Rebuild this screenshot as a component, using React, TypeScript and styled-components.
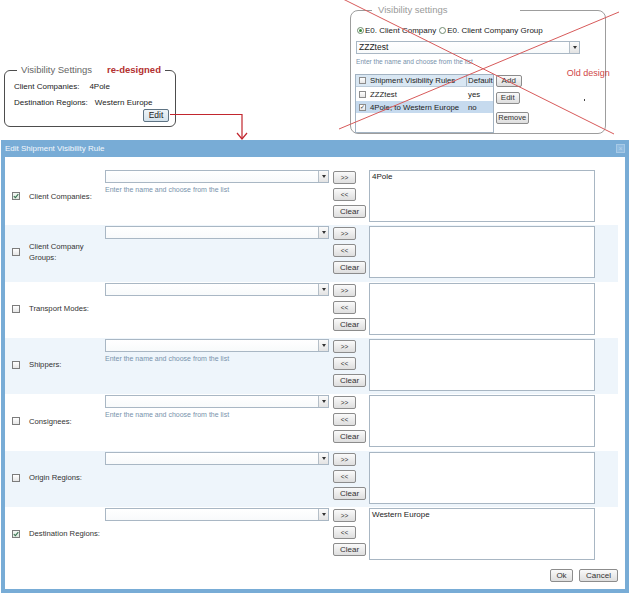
import React from "react";
import styled, { createGlobalStyle } from "styled-components";

const GlobalStyle = createGlobalStyle`
  html, body { margin: 0; padding: 0; background: #fff; }
  body {
    font-family: "Liberation Sans", Arial, sans-serif;
    color: #222;
    width: 636px;
    height: 596px;
    overflow: hidden;
  }
  * { box-sizing: border-box; }
`;

const Page = styled.div`
  width: 636px;
  height: 596px;
`;

/* ---------- top area ---------- */

const TopArea = styled.div`
  position: relative;
  height: 140px;
  display: flex;
  align-items: flex-start;
`;

const Overlay = styled.svg`
  position: absolute;
  left: 0;
  top: 0;
  width: 636px;
  height: 140px;
  pointer-events: none;
  overflow: visible;
`;

const NewPanel = styled.fieldset`
  margin: 64px 0 0 4px;
  width: 172px;
  height: 63px;
  padding: 0 6px 0 9px;
  border: 1px solid #4d4d4d;
  border-radius: 6px;
  min-width: 0;
`;

const NewLegend = styled.legend`
  margin-left: 3px;
  padding: 0 4px;
  font-size: 9.5px;
  line-height: 12px;
  color: #666;
`;

const RedTag = styled.span`
  margin-left: 15px;
  font-weight: bold;
  color: #b3302f;
`;

const InfoList = styled.div`
  padding-top: 2px;
`;

const InfoRow = styled.div<{ $gap: number }>`
  display: flex;
  gap: ${(p) => p.$gap}px;
  height: 16px;
  align-items: center;
  font-size: 8px;
  color: #222;
`;

const ButtonRow = styled.div`
  display: flex;
  justify-content: flex-end;
  margin-top: -1px;
`;

const BlueButton = styled.button`
  width: 26px;
  height: 13px;
  padding: 0;
  border: 1px solid #5e7383;
  border-radius: 2px;
  background: linear-gradient(#eef4f8, #d3e2ec);
  font-family: inherit;
  font-size: 8.5px;
  line-height: 11px;
  color: #222;
`;

const OldPanel = styled.fieldset`
  margin: 4px 0 0 174px;
  width: 256px;
  height: 130px;
  padding: 0 5px;
  border: 1px solid #9d9d9d;
  border-radius: 8px;
  min-width: 0;
`;

const OldLegend = styled.legend`
  margin-left: 16px;
  padding: 0 6px;
  width: 148px;
  font-size: 9.5px;
  line-height: 12px;
  color: #9a9a9a;
`;

const RadioRow = styled.div`
  margin-top: 7px;
  height: 14px;
  display: flex;
  align-items: center;
  font-size: 8px;
  color: #222;
`;

const Radio = styled.span<{ $on: boolean }>`
  width: 7px;
  height: 7px;
  margin: 0 1px 0 ${(p) => (p.$on ? 1 : 3)}px;
  border-radius: 50%;
  border: 1px solid #6f8a6f;
  background: #fff;
  display: inline-flex;
  align-items: center;
  justify-content: center;
  &::after {
    content: "";
    width: 3px;
    height: 3px;
    border-radius: 50%;
    background: ${(p) => (p.$on ? "#3a8a3a" : "transparent")};
  }
`;

const SelectBox = styled.div<{ $w: number; $mt: number }>`
  width: ${(p) => p.$w}px;
  height: 13px;
  margin-top: ${(p) => p.$mt}px;
  border: 1px solid #a9b7c4;
  background: linear-gradient(#fff, #f8fafb);
  display: flex;
  align-items: stretch;
  font-size: 8.5px;
  color: #222;
`;

const SelectText = styled.span`
  flex: 1;
  padding-left: 2px;
  line-height: 11px;
`;

const SelectArrow = styled.span`
  width: 10px;
  border-left: 1px solid #b5bfc8;
  background: linear-gradient(#fbfbfb, #e3e3e3);
  display: flex;
  align-items: center;
  justify-content: center;
  &::after {
    content: "";
    border-left: 2px solid transparent;
    border-right: 2px solid transparent;
    border-top: 3px solid #333;
  }
`;

const Hint = styled.div<{ $size: number; $mt: number }>`
  margin-top: ${(p) => p.$mt}px;
  font-size: ${(p) => p.$size}px;
  line-height: 8px;
  color: #7892ab;
  white-space: nowrap;
`;

const OldBottom = styled.div`
  display: flex;
  align-items: flex-start;
  margin-top: 8px;
`;

const RuleTable = styled.div`
  width: 144px;
  height: 59px;
  margin-left: -1px;
  border: 1px solid #a3b3c2;
  background: #fff;
  font-size: 7.8px;
  color: #222;
`;

const TableLine = styled.div<{ $kind: "head" | "row" | "sel" }>`
  height: 12px;
  display: flex;
  align-items: center;
  margin-top: ${(p) => (p.$kind === "head" ? 0 : 1)}px;
  background: ${(p) =>
    p.$kind === "head" ? "#d9e7f3" : p.$kind === "sel" ? "#c6daee" : "transparent"};
  border-bottom: ${(p) => (p.$kind === "head" ? "1px solid #bccbd9" : "none")};
`;

const FirstCell = styled.div`
  width: 110px;
  display: flex;
  align-items: center;
  gap: 4px;
  padding-left: 3px;
  white-space: nowrap;
  overflow: hidden;
`;

const SecondCell = styled.div<{ $divider: boolean }>`
  flex: 1;
  height: 100%;
  display: flex;
  align-items: center;
  padding-left: 1px;
  border-left: 1px solid ${(p) => (p.$divider ? "#a3b3c2" : "transparent")};
`;

const TinyCheck = styled.span<{ $on: boolean }>`
  width: 7px;
  height: 7px;
  flex: none;
  border: 1px solid #8c8c8c;
  background: linear-gradient(#fff, #e6e6e6);
  display: inline-flex;
  align-items: center;
  justify-content: center;
  font-size: 6px;
  line-height: 6px;
  color: #333;
`;

const SideButtons = styled.div`
  margin-left: 2px;
  display: flex;
  flex-direction: column;
  align-items: flex-start;
`;

const GreyButton = styled.button<{ $w: number; $h: number; $mt: number; $size: number }>`
  width: ${(p) => p.$w}px;
  height: ${(p) => p.$h}px;
  margin-top: ${(p) => p.$mt}px;
  padding: 0;
  border: 1px solid #8c8c8c;
  border-radius: 2px;
  background: linear-gradient(#fafafa, #dedede);
  font-family: inherit;
  font-size: ${(p) => p.$size}px;
  line-height: ${(p) => p.$h - 2}px;
  color: #333;
  white-space: nowrap;
`;

const Annotation = styled.div`
  margin: -7px 0 0 38px;
  display: flex;
  flex-direction: column;
  flex: none;
`;

const OldNote = styled.span`
  font-size: 9px;
  line-height: 12px;
  color: #d04747;
  white-space: nowrap;
`;

const Dot = styled.span`
  width: 1.5px;
  height: 1.5px;
  margin: 20px 0 0 17px;
  background: #444;
`;

/* ---------- dialog ---------- */

const Dialog = styled.section`
  margin-left: 1px;
  width: 628px;
  padding: 0 4px 4px;
  background: #78acd6;
`;

const TitleBar = styled.header`
  height: 17px;
  display: flex;
  align-items: center;
  justify-content: space-between;
  font-size: 8px;
  color: #f4f8fc;
`;

const CloseBox = styled.span`
  width: 9px;
  height: 9px;
  border: 1px solid #a8cae6;
  background: #8fbbe0;
  color: #b9d5ec;
  font-size: 7px;
  line-height: 7px;
  text-align: center;
`;

const Body = styled.div`
  background: #fff;
  padding: 12px 7px 0 0;
`;

const RuleRow = styled.div<{ $alt: boolean }>`
  display: flex;
  align-items: flex-start;
  height: 56.33px;
  padding-top: 1px;
  background: ${(p) => (p.$alt ? "#eef5fb" : "transparent")};
`;

const LeftCell = styled.div`
  width: 100px;
  height: 52px;
  padding-left: 7px;
  display: flex;
  align-items: center;
`;

const Check = styled.span<{ $on: boolean }>`
  width: 8px;
  height: 8px;
  flex: none;
  margin-right: 9px;
  border: 1px solid #7c7c7c;
  background: ${(p) => (p.$on ? "linear-gradient(#f4f8f4, #dfe9df)" : "linear-gradient(#fff, #e6e6e6)")};
  display: flex;
  align-items: center;
  justify-content: center;
`;

const RuleLabel = styled.span`
  width: 76px;
  font-size: 7.7px;
  line-height: 11px;
  color: #333;
`;

const SelectCol = styled.div`
  width: 224px;
  margin-right: 4px;
`;

const BtnCol = styled.div`
  width: 33px;
  margin-right: 3px;
  display: flex;
  flex-direction: column;
  align-items: flex-start;
`;

const ListBox = styled.div`
  width: 226px;
  height: 52px;
  padding: 0 2px;
  border: 1px solid #a8b6c3;
  background: #fff;
  font-size: 8px;
  line-height: 11px;
  color: #222;
`;

const Footer = styled.div`
  display: flex;
  justify-content: flex-end;
  gap: 6px;
  padding: 6px 0 7px;
`;

type Rule = { label: string; checked: boolean; hint: boolean; value?: string };

const rules: Rule[] = [
  { label: "Client Companies:", checked: true, hint: true, value: "4Pole" },
  { label: "Client Company Groups:", checked: false, hint: false },
  { label: "Transport Modes:", checked: false, hint: false },
  { label: "Shippers:", checked: false, hint: true },
  { label: "Consignees:", checked: false, hint: true },
  { label: "Origin Regions:", checked: false, hint: false },
  { label: "Destination Regions:", checked: true, hint: false, value: "Western Europe" },
];

const HINT = "Enter the name and choose from the list";

const CheckMark = () => (
  <svg width="6" height="6" viewBox="0 0 6 6">
    <path d="M0.8 3.1 L2.4 4.7 L5.3 1.1" fill="none" stroke="#3b7454" strokeWidth="1.1" />
  </svg>
);

export default function App() {
  return (
    <Page>
      <GlobalStyle />
      <TopArea>
        <NewPanel>
          <NewLegend>
            Visibility Settings<RedTag>re-designed</RedTag>
          </NewLegend>
          <InfoList>
            <InfoRow $gap={10}>
              <span>Client Companies:</span>
              <span>4Pole</span>
            </InfoRow>
            <InfoRow $gap={7}>
              <span>Destination Regions:</span>
              <span>Western Europe</span>
            </InfoRow>
          </InfoList>
          <ButtonRow>
            <BlueButton>Edit</BlueButton>
          </ButtonRow>
        </NewPanel>

        <OldPanel>
          <OldLegend>Visibility settings</OldLegend>
          <RadioRow>
            <Radio $on={true} />
            <span>E0. Client Company</span>
            <Radio $on={false} />
            <span>E0. Client Company Group</span>
          </RadioRow>
          <SelectBox $w={224} $mt={4}>
            <SelectText>ZZZtest</SelectText>
            <SelectArrow />
          </SelectBox>
          <Hint $size={6.6} $mt={4}>{HINT}</Hint>
          <OldBottom>
            <RuleTable>
              <TableLine $kind="head">
                <FirstCell>
                  <TinyCheck $on={false} />
                  Shipment Visibility Rules
                </FirstCell>
                <SecondCell $divider={true}>Default</SecondCell>
              </TableLine>
              <TableLine $kind="row">
                <FirstCell>
                  <TinyCheck $on={false} />
                  ZZZtest
                </FirstCell>
                <SecondCell $divider={false}>yes</SecondCell>
              </TableLine>
              <TableLine $kind="sel">
                <FirstCell>
                  <TinyCheck $on={true}>✓</TinyCheck>
                  4Pole; to Western Europe
                </FirstCell>
                <SecondCell $divider={false}>no</SecondCell>
              </TableLine>
            </RuleTable>
            <SideButtons>
              <GreyButton $w={26} $h={12} $mt={1} $size={8}>Add</GreyButton>
              <GreyButton $w={24} $h={12} $mt={5} $size={8}>Edit</GreyButton>
              <GreyButton $w={33} $h={12} $mt={8} $size={7.5}>Remove</GreyButton>
            </SideButtons>
            <Annotation>
              <OldNote>Old design</OldNote>
              <Dot />
            </Annotation>
          </OldBottom>
        </OldPanel>

        <Overlay viewBox="0 0 636 140">
          <line x1="343" y1="-1" x2="614" y2="134" stroke="#d75a5a" strokeWidth="1" />
          <line x1="619" y1="12" x2="339" y2="129" stroke="#d75a5a" strokeWidth="1" />
          <polyline
            points="170,114.5 242,114.5 242,139"
            fill="none"
            stroke="#c2262e"
            strokeWidth="1.2"
          />
          <polyline
            points="237,133 242,139 247,133"
            fill="none"
            stroke="#c2262e"
            strokeWidth="1.2"
          />
        </Overlay>
      </TopArea>

      <Dialog>
        <TitleBar>
          <span>Edit Shipment Visibility Rule</span>
          <CloseBox>×</CloseBox>
        </TitleBar>
        <Body>
          {rules.map((r, i) => (
            <RuleRow key={r.label} $alt={i % 2 === 1}>
              <LeftCell>
                <Check $on={r.checked}>{r.checked && <CheckMark />}</Check>
                <RuleLabel>{r.label}</RuleLabel>
              </LeftCell>
              <SelectCol>
                <SelectBox $w={224} $mt={0}>
                  <SelectText />
                  <SelectArrow />
                </SelectBox>
                {r.hint && <Hint $size={7} $mt={3}>{HINT}</Hint>}
              </SelectCol>
              <BtnCol>
                <GreyButton $w={23} $h={13} $mt={1} $size={6.5}>&gt;&gt;</GreyButton>
                <GreyButton $w={23} $h={13} $mt={4} $size={6.5}>&lt;&lt;</GreyButton>
                <GreyButton $w={33} $h={13} $mt={4} $size={8}>Clear</GreyButton>
              </BtnCol>
              <ListBox>{r.value}</ListBox>
            </RuleRow>
          ))}
          <Footer>
            <GreyButton $w={23} $h={13} $mt={0} $size={8}>Ok</GreyButton>
            <GreyButton $w={39} $h={13} $mt={0} $size={8}>Cancel</GreyButton>
          </Footer>
        </Body>
      </Dialog>
    </Page>
  );
}
